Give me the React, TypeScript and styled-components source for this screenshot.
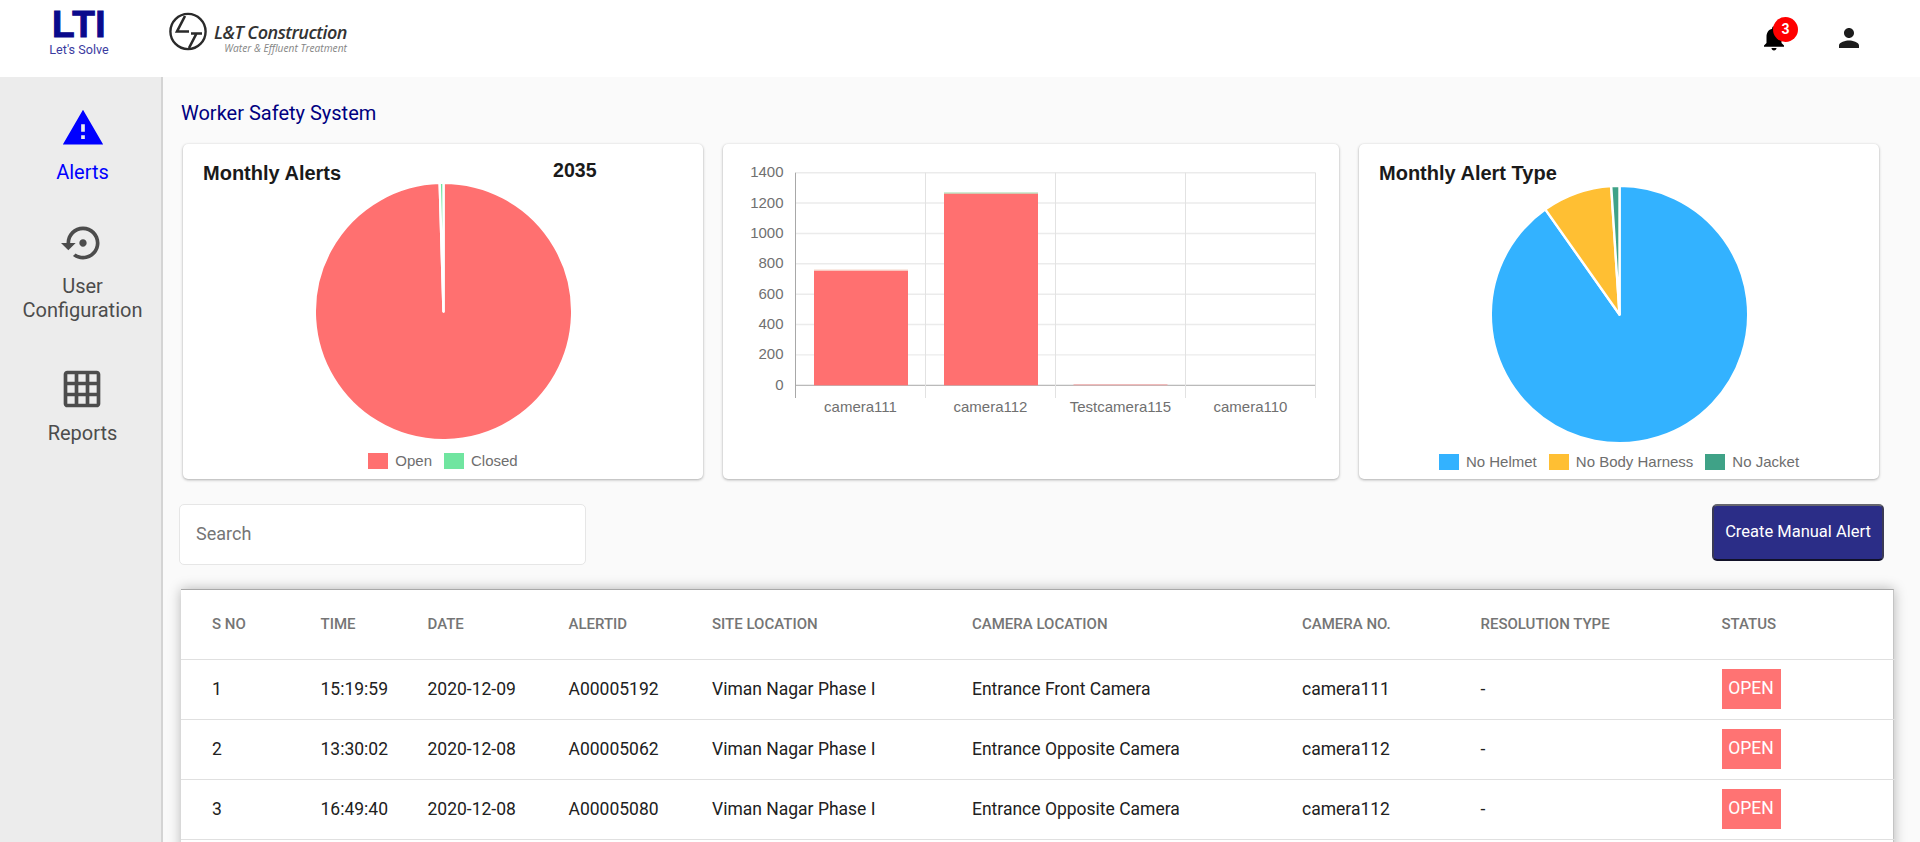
import { createGlobalStyle, styled } from "styled-components";

const GlobalStyle = createGlobalStyle`
  html, body {
    margin: 0;
    height: 100%;
    overflow: hidden;
    background: #fafafa;
    font-family: Roboto, "Liberation Sans", sans-serif;
  }
  * { box-sizing: border-box; }
`;

const Page = styled.div`
  display: flex;
  flex-direction: column;
  height: 842px;
  overflow: hidden;
`;

const Header = styled.header`
  display: flex;
  align-items: flex-start;
  height: 77px;
  flex: none;
  background: #fff;
`;

const LtiLogo = styled.div`
  display: flex;
  flex-direction: column;
  align-items: center;
  width: 58px;
  margin: 6px 0 0 50px;
`;

const LtiMark = styled.span`
  font-family: "Liberation Sans", sans-serif;
  font-weight: 700;
  font-size: 37px;
  line-height: 38px;
  height: 38px;
  color: #0a0a8c;
  -webkit-text-stroke: 1px #0a0a8c;
  letter-spacing: 0.5px;
`;

const LtiTagline = styled.span`
  font-size: 12.6px;
  line-height: 16px;
  color: #3b3b9f;
  white-space: nowrap;
  margin-top: -2px;
`;

const LntLogo = styled.div`
  display: flex;
  gap: 7px;
  margin: 12px 0 0 61px;
`;

const LntText = styled.div`
  display: flex;
  flex-direction: column;
  align-items: flex-end;
  margin-top: 10px;
`;

const LntName = styled.span`
  font-family: "Open Sans", sans-serif;
  font-weight: 600;
  font-style: italic;
  font-size: 18px;
  line-height: 20px;
  letter-spacing: -0.5px;
  color: #333;
  white-space: nowrap;
`;

const LntSub = styled.span`
  font-family: "Open Sans", sans-serif;
  font-style: italic;
  font-size: 10.2px;
  line-height: 12px;
  color: #858585;
  white-space: nowrap;
`;

const HeaderIcons = styled.div`
  display: flex;
  margin: 23px 0 0 auto;
  padding-right: 56px;
  gap: 45px;
`;

const IconButton = styled.div`
  position: relative;
  width: 30px;
  height: 30px;
`;

const Badge = styled.span`
  position: absolute;
  top: -6px;
  left: 14px;
  width: 25px;
  height: 25px;
  border-radius: 50%;
  background: #f00;
  color: #fff;
  font-size: 14px;
  font-weight: 700;
  line-height: 25px;
  text-align: center;
`;

const Body = styled.div`
  display: flex;
  flex: 1;
  min-height: 0;
`;

const Sidebar = styled.nav`
  display: flex;
  flex-direction: column;
  align-items: center;
  width: 163px;
  flex: none;
  background: #ececec;
  border-right: 2px solid #d4d4d4;
  padding: 29px 0 0 4px;
`;

const NavItem = styled.div<{ $active?: boolean; $gap: number; $iconGap: number }>`
  display: flex;
  flex-direction: column;
  align-items: center;
  margin-bottom: ${(p) => p.$gap}px;
  color: ${(p) => (p.$active ? "#0000ff" : "#4c4c4c")};
  font-size: 20px;
  line-height: 24px;
  text-align: center;
  svg {
    display: block;
    margin-bottom: ${(p) => p.$iconGap}px;
  }
`;

const Main = styled.main`
  flex: 1;
  min-width: 0;
  padding: 24px 0 0 18px;
`;

const PageTitle = styled.h1`
  margin: 0 0 19px;
  font-size: 20px;
  font-weight: 400;
  line-height: 24px;
  color: #000080;
`;

const ChartRow = styled.div`
  display: grid;
  grid-template-columns: 520px 616px 520px;
  gap: 20px;
  margin-left: 2px;
`;

const Card = styled.section`
  height: 335px;
  background: #fff;
  border-radius: 5px;
  box-shadow: 0 1px 3px rgba(0, 0, 0, 0.3), 0 0 2px rgba(0, 0, 0, 0.06);
  overflow: hidden;
`;

const PieCard = styled(Card)<{ $top: number }>`
  display: flex;
  flex-direction: column;
  align-items: center;
  padding-top: 16px;
  svg {
    display: block;
    margin-top: ${(p) => p.$top}px;
    overflow: visible;
  }
`;

const TitleRow = styled.div`
  display: flex;
  align-self: stretch;
  justify-content: space-between;
  height: 24px;
  padding: 1px 0 0 20px;
  font-family: "Liberation Sans", sans-serif;
  font-weight: 700;
  font-size: 20px;
  line-height: 24px;
  color: #1a1a1a;
`;

const Count = styled.span`
  width: 150px;
  margin-top: -3px;
  font-size: 19.6px;
`;

const Legend = styled.div<{ $top: number }>`
  display: flex;
  gap: 12px;
  height: 16px;
  margin-top: ${(p) => p.$top}px;
  font-family: "Liberation Sans", sans-serif;
  font-size: 15px;
  line-height: 16px;
  color: #6e6e6e;
`;

const LegendItem = styled.span`
  display: flex;
  align-items: center;
  gap: 7px;
`;

const Swatch = styled.i<{ $color: string }>`
  display: block;
  width: 20px;
  height: 16px;
  background: ${(p) => p.$color};
`;

const BarSvg = styled.svg`
  display: block;
  font-family: "Liberation Sans", sans-serif;
  font-size: 15px;
  fill: #707070;
`;

const Toolbar = styled.div`
  display: flex;
  align-items: flex-start;
  justify-content: space-between;
  margin-top: 25px;
  padding-right: 36px;
`;

const SearchInput = styled.input`
  width: 407px;
  height: 61px;
  margin-left: -2px;
  padding: 0 16px 2px;
  background: #fff;
  border: 1px solid #e6e6e6;
  border-radius: 5px;
  font-family: Roboto, sans-serif;
  font-size: 18px;
  outline: none;
  &::placeholder {
    color: #757575;
    opacity: 1;
  }
`;

const CreateButton = styled.button`
  width: 172px;
  height: 57px;
  background: #2b2d87;
  border: 2px solid;
  border-color: #66666e #3a3a55 #111128 #3a3a55;
  border-radius: 5px;
  color: #fff;
  font-family: Roboto, sans-serif;
  font-size: 16.5px;
  padding: 0 0 2px;
`;

const TablePanel = styled.div`
  margin: 24px 26px 0 0;
  min-height: 320px;
  background: #fff;
  border-top: 1px solid #a8a8a8;
  border-right: 1px solid #c4c4c4;
  box-shadow: 0 0 12px rgba(0, 0, 0, 0.28);
`;

const Table = styled.table`
  width: 100%;
  table-layout: fixed;
  border-collapse: collapse;
`;

const HeadCell = styled.th`
  height: 69px;
  padding: 0;
  text-align: left;
  font-size: 15px;
  font-weight: 500;
  color: #757575;
  border-bottom: 1px solid #e0e0e0;
  white-space: nowrap;
  &:first-child {
    padding-left: 31px;
  }
`;

const Cell = styled.td`
  height: 60px;
  padding: 0;
  font-size: 17.5px;
  font-weight: 400;
  color: #212121;
  border-bottom: 1px solid #e0e0e0;
  white-space: nowrap;
  &:first-child {
    padding-left: 31px;
  }
`;

const StatusTag = styled.span`
  display: block;
  width: 59px;
  height: 40px;
  background: #ff7373;
  color: #fff;
  font-size: 17.5px;
  font-weight: 400;
  line-height: 38px;
  text-align: center;
`;

const RED = "#ff7070";
const GREEN = "#70e5a0";

const columns = [
  { title: "S No", width: 139.5 },
  { title: "Time", width: 107 },
  { title: "Date", width: 141 },
  { title: "AlertID", width: 143.5 },
  { title: "Site Location", width: 260 },
  { title: "Camera Location", width: 330 },
  { title: "Camera No.", width: 178.5 },
  { title: "Resolution Type", width: 241 },
  { title: "Status", width: 173 },
];

const rows = [
  ["1", "15:19:59", "2020-12-09", "A00005192", "Viman Nagar Phase I", "Entrance Front Camera", "camera111", "-"],
  ["2", "13:30:02", "2020-12-08", "A00005062", "Viman Nagar Phase I", "Entrance Opposite Camera", "camera112", "-"],
  ["3", "16:49:40", "2020-12-08", "A00005080", "Viman Nagar Phase I", "Entrance Opposite Camera", "camera112", "-"],
];

type Slice = { color: string; from: number; to: number };

// the white slice border sits half outside, so the drawn radius is a bit over the box
function slicePath(c: number, r: number, from: number, to: number) {
  const toXY = (deg: number) => {
    const a = ((deg - 90) * Math.PI) / 180;
    return `${c + r * Math.cos(a)} ${c + r * Math.sin(a)}`;
  };
  const large = to - from > 180 ? 1 : 0;
  return `M${c} ${c}L${toXY(from)}A${r} ${r} 0 ${large} 1 ${toXY(to)}Z`;
}

function Pie({ slices }: { slices: Slice[] }) {
  const c = 127.5;
  return (
    <svg width={c * 2} height={c * 2} viewBox={`0 0 ${c * 2} ${c * 2}`}>
      {slices.map((s) => (
        <path key={s.color} d={slicePath(c, 128.7, s.from, s.to)} fill={s.color} stroke="#fff" strokeWidth={2.4} strokeLinejoin="round" />
      ))}
    </svg>
  );
}

function BarChart() {
  const left = 72.5;
  const top = 28.7;
  const zero = 241.3;
  const step = 30.37;
  const catW = 130;
  const ticks = [1400, 1200, 1000, 800, 600, 400, 200, 0];
  const cats = ["camera111", "camera112", "Testcamera115", "camera110"];
  const bars = [
    { x: 91, top: 126.5, cap: "#f6d6c8" },
    { x: 221, top: 49.5, cap: "#a4d8a8" },
  ];
  return (
    <BarSvg width={616} height={335} viewBox="0 0 616 335">
      {ticks.map((t, i) => (
        <g key={t}>
          <line x1={left} x2={left + catW * 4} y1={top + step * i} y2={top + step * i} stroke={t === 0 ? "#a8a8a8" : "#ebebeb"} strokeWidth={t === 0 ? 1 : 1.4} />
          <text x={60.5} y={top + step * i + 4.5} textAnchor="end">{t}</text>
        </g>
      ))}
      {[0, 1, 2, 3, 4].map((i) => (
        <line key={i} x1={left + catW * i} x2={left + catW * i} y1={top} y2={254} stroke={i === 0 ? "#a8a8a8" : "#e2e2e2"} />
      ))}
      {bars.map((b) => (
        <g key={b.x}>
          <rect x={b.x} y={b.top} width={94} height={zero - b.top} fill={RED} />
          <rect x={b.x} y={b.top - 1} width={94} height={1} fill={b.cap} />
        </g>
      ))}
      <line x1={left + catW * 2 + 18} x2={left + catW * 2 + 112} y1={zero - 0.5} y2={zero - 0.5} stroke="#f3a6a6" />
      {cats.map((c, i) => (
        <text key={c} x={left + catW * (i + 0.5)} y={268} textAnchor="middle">{c}</text>
      ))}
    </BarSvg>
  );
}

export default function App() {
  return (
    <Page>
      <GlobalStyle />
      <Header>
        <LtiLogo>
          <LtiMark>LTI</LtiMark>
          <LtiTagline>Let's Solve</LtiTagline>
        </LtiLogo>
        <LntLogo>
          <svg width="38" height="39" viewBox="0 0 38 39" fill="none" stroke="#2a2a2a">
            <circle cx="19" cy="19.5" r="17.6" strokeWidth="2.4" />
            <path d="M16 4 L8 19.5 H20" strokeWidth="2.6" />
            <path d="M22 21.5 H33 M27.5 21.5 L20 36" strokeWidth="2.6" />
          </svg>
          <LntText>
            <LntName>L&amp;T Construction</LntName>
            <LntSub>Water &amp; Effluent Treatment</LntSub>
          </LntText>
        </LntLogo>
        <HeaderIcons>
          <IconButton>
            <svg width="30" height="30" viewBox="0 0 24 24" fill="#000">
              <path d="M12 22c1.1 0 2-.9 2-2h-4c0 1.1.89 2 2 2zm6-6v-5c0-3.07-1.64-5.64-4.5-6.32V4c0-.83-.67-1.5-1.5-1.5s-1.5.67-1.5 1.5v.68C7.63 5.36 6 7.92 6 11v5l-2 2v1h16v-1l-2-2z" />
            </svg>
            <Badge>3</Badge>
          </IconButton>
          <IconButton>
            <svg width="30" height="30" viewBox="0 0 24 24" fill="#1c1c1c">
              <path d="M12 12c2.21 0 4-1.79 4-4s-1.79-4-4-4-4 1.79-4 4 1.79 4 4 4zm0 2c-2.67 0-8 1.34-8 4v2h16v-2c0-2.66-5.33-4-8-4z" />
            </svg>
          </IconButton>
        </HeaderIcons>
      </Header>
      <Body>
        <Sidebar>
          <NavItem $active $gap={37} $iconGap={10}>
            <svg width="44" height="44" viewBox="0 0 24 24" fill="currentColor">
              <path d="M1 21h22L12 2 1 21zm12-3h-2v-2h2v2zm0-4h-2v-4h2v4z" />
            </svg>
            Alerts
          </NavItem>
          <NavItem $gap={45} $iconGap={9}>
            <svg width="44" height="44" viewBox="0 0 24 24" fill="currentColor">
              <path d="M14 12c0-1.1-.9-2-2-2s-2 .9-2 2 .9 2 2 2 2-.9 2-2zm-2-9c-4.97 0-9 4.03-9 9H0l4 4 4-4H5c0-3.87 3.13-7 7-7s7 3.13 7 7-3.13 7-7 7c-1.51 0-2.91-.49-4.06-1.3l-1.42 1.44C8.04 20.3 9.94 21 12 21c4.97 0 9-4.03 9-9s-4.03-9-9-9z" />
            </svg>
            User
            <br />
            Configuration
          </NavItem>
          <NavItem $gap={0} $iconGap={10}>
            <svg width="44" height="44" viewBox="0 0 24 24" fill="currentColor">
              <path d="M20 2H4c-1.1 0-2 .9-2 2v16c0 1.1.9 2 2 2h16c1.1 0 2-.9 2-2V4c0-1.1-.9-2-2-2zM8 20H4v-4h4v4zm0-6H4v-4h4v4zm0-6H4V4h4v4zm6 12h-4v-4h4v4zm0-6h-4v-4h4v4zm0-6h-4V4h4v4zm6 12h-4v-4h4v4zm0-6h-4v-4h4v4zm0-6h-4V4h4v4z" />
            </svg>
            Reports
          </NavItem>
        </Sidebar>
        <Main>
          <PageTitle>Worker Safety System</PageTitle>
          <ChartRow>
            <PieCard $top={0}>
              <TitleRow>
                <span>Monthly Alerts</span>
                <Count>2035</Count>
              </TitleRow>
              <Pie
                slices={[
                  { color: RED, from: 0, to: 358.3 },
                  { color: GREEN, from: 358.3, to: 360 },
                ]}
              />
              <Legend $top={14}>
                <LegendItem><Swatch $color={RED} />Open</LegendItem>
                <LegendItem><Swatch $color={GREEN} />Closed</LegendItem>
              </Legend>
            </PieCard>
            <Card>
              <BarChart />
            </Card>
            <PieCard $top={3}>
              <TitleRow>
                <span>Monthly Alert Type</span>
              </TitleRow>
              <Pie
                slices={[
                  { color: "#33b2ff", from: 0, to: 324.8 },
                  { color: "#ffbf33", from: 324.8, to: 356.3 },
                  { color: "#3fa287", from: 356.3, to: 360 },
                ]}
              />
              <Legend $top={12}>
                <LegendItem><Swatch $color="#33b2ff" />No Helmet</LegendItem>
                <LegendItem><Swatch $color="#ffbf33" />No Body Harness</LegendItem>
                <LegendItem><Swatch $color="#3fa287" />No Jacket</LegendItem>
              </Legend>
            </PieCard>
          </ChartRow>
          <Toolbar>
            <SearchInput placeholder="Search" />
            <CreateButton>Create Manual Alert</CreateButton>
          </Toolbar>
          <TablePanel>
            <Table>
              <colgroup>
                {columns.map((c) => (
                  <col key={c.title} width={c.width} />
                ))}
              </colgroup>
              <thead>
                <tr>
                  {columns.map((c) => (
                    <HeadCell key={c.title}>{c.title.toUpperCase()}</HeadCell>
                  ))}
                </tr>
              </thead>
              <tbody>
                {rows.map((row) => (
                  <tr key={row[0]}>
                    {row.map((value, i) => (
                      <Cell key={i}>{value}</Cell>
                    ))}
                    <Cell>
                      <StatusTag>OPEN</StatusTag>
                    </Cell>
                  </tr>
                ))}
              </tbody>
            </Table>
          </TablePanel>
        </Main>
      </Body>
    </Page>
  );
}
